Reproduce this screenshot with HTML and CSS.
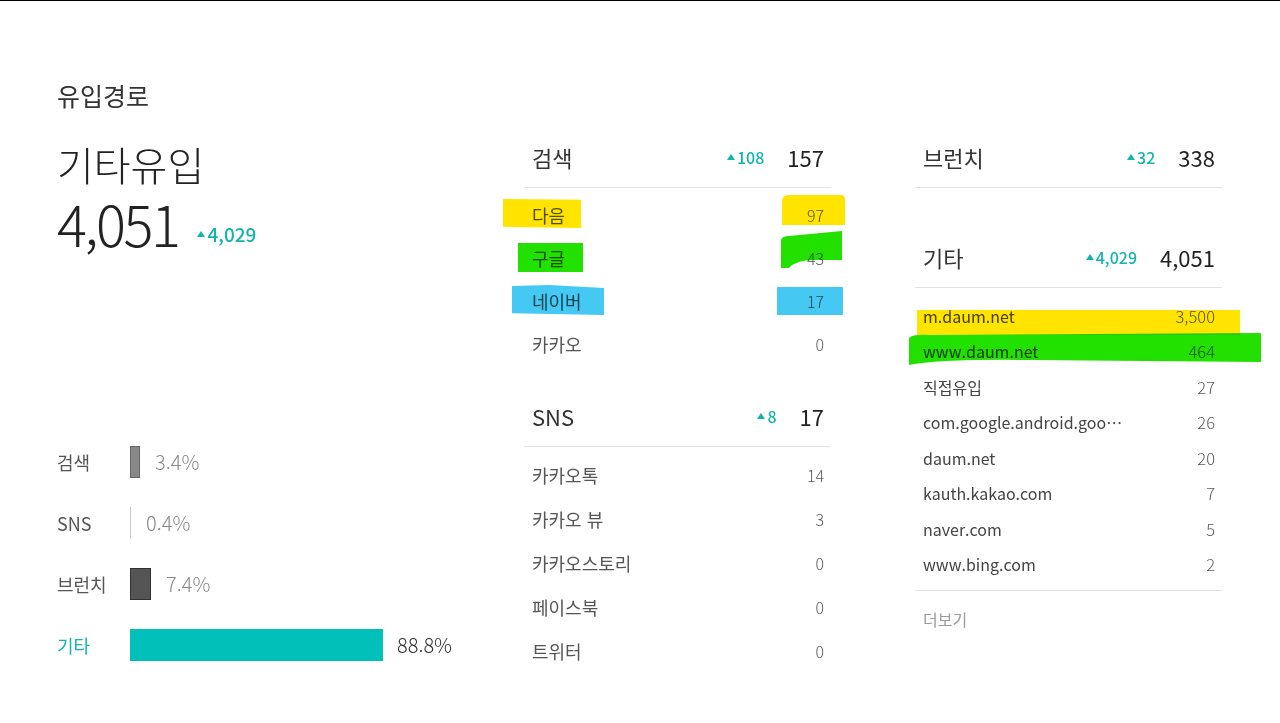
FILE: index.html
```html
<!DOCTYPE html>
<html lang="ko">
<head>
<meta charset="utf-8">
<title>유입경로</title>
<link rel="stylesheet" href="styles.css">
</head>
<body>
<div class="page">
  <h1 class="page-title">유입경로</h1>
  <div class="columns">
    <section class="summary">
      <h2 class="summary-title">기타유입</h2>
      <div class="summary-value"><span class="big-num">4,051</span><span class="delta delta-lg">4,029</span></div>
      <ul class="share-list">
        <li class="share-row"><span class="share-label">검색</span><span class="bar bar-search" style="width:10px"></span><span class="pct">3.4%</span></li>
        <li class="share-row"><span class="share-label">SNS</span><span class="bar bar-sns" style="width:1px"></span><span class="pct">0.4%</span></li>
        <li class="share-row"><span class="share-label">브런치</span><span class="bar bar-brunch" style="width:21px"></span><span class="pct">7.4%</span></li>
        <li class="share-row share-active"><span class="share-label">기타</span><span class="bar bar-etc" style="width:253px"></span><span class="pct">88.8%</span></li>
      </ul>
    </section>

    <section class="col">
      <div class="group">
        <div class="group-head"><span class="group-name">검색</span><span class="delta">108</span><span class="group-total">157</span></div>
        <ul class="rows rows-mid">
          <li class="row"><span class="row-name">다음</span><span class="row-num">97</span></li>
          <li class="row"><span class="row-name">구글</span><span class="row-num">43</span></li>
          <li class="row"><span class="row-name">네이버</span><span class="row-num">17</span></li>
          <li class="row"><span class="row-name">카카오</span><span class="row-num">0</span></li>
          <li class="hl hl-y1"></li>
          <li class="hl hl-y2"></li>
          <li class="hl hl-g1"></li>
          <li class="hl hl-g2"><svg viewBox="0 0 62 37" preserveAspectRatio="none"><path d="M1 9 Q2 5 9 5 L62 0 L62 29 L34 29 Q16 29 9 37 L1 37 Z" fill="#22e000"/></svg></li>
          <li class="hl hl-b1"></li>
          <li class="hl hl-b2"></li>
        </ul>
      </div>
      <div class="group group-sns">
        <div class="group-head"><span class="group-name">SNS</span><span class="delta">8</span><span class="group-total">17</span></div>
        <ul class="rows rows-sns">
          <li class="row"><span class="row-name">카카오톡</span><span class="row-num">14</span></li>
          <li class="row"><span class="row-name">카카오 뷰</span><span class="row-num">3</span></li>
          <li class="row"><span class="row-name">카카오스토리</span><span class="row-num">0</span></li>
          <li class="row"><span class="row-name">페이스북</span><span class="row-num">0</span></li>
          <li class="row"><span class="row-name">트위터</span><span class="row-num">0</span></li>
        </ul>
      </div>
    </section>

    <section class="col">
      <div class="group">
        <div class="group-head"><span class="group-name">브런치</span><span class="delta">32</span><span class="group-total">338</span></div>
      </div>
      <div class="group group-etc">
        <div class="group-head"><span class="group-name">기타</span><span class="delta">4,029</span><span class="group-total">4,051</span></div>
        <ul class="rows rows-small">
          <li class="row"><span class="row-name">m.daum.net</span><span class="row-num">3,500</span></li>
          <li class="row"><span class="row-name">www.daum.net</span><span class="row-num">464</span></li>
          <li class="row"><span class="row-name">직접유입</span><span class="row-num">27</span></li>
          <li class="row"><span class="row-name">com.google.android.goo…</span><span class="row-num">26</span></li>
          <li class="row"><span class="row-name">daum.net</span><span class="row-num">20</span></li>
          <li class="row"><span class="row-name">kauth.kakao.com</span><span class="row-num">7</span></li>
          <li class="row"><span class="row-name">naver.com</span><span class="row-num">5</span></li>
          <li class="row"><span class="row-name">www.bing.com</span><span class="row-num">2</span></li>
          <li class="hl hl-y3"></li>
          <li class="hl hl-g3"><svg viewBox="0 0 352 32" preserveAspectRatio="none"><path d="M0 5 Q4 1 20 2 L352 0 L352 29 L120 27 Q30 26 0 32 Z" fill="#22e000"/></svg></li>
        </ul>
        <a class="more" href="#">더보기</a>
      </div>
    </section>
  </div>
</div>
</body>
</html>
```

FILE: styles.css
```css
* { box-sizing: border-box; }

body {
  margin: 0;
  border-top: 1px solid #000;
  background: #fff;
  color: #333;
  font-family: "Noto Sans CJK KR", "Noto Sans", sans-serif;
}

ul { list-style: none; margin: 0; padding: 0; }

.page { padding: 0 0 0 57px; }

.page-title {
  margin: 0;
  padding-top: 78px;
  font-size: 25px;
  line-height: 32px;
  font-weight: 400;
  color: #333;
}

.columns {
  display: grid;
  grid-template-columns: 383px 307px 307px;
  column-gap: 84px;
  margin-top: 17px;
}

/* summary */
.summary-title {
  margin: 16px 0 0;
  font-size: 40px;
  line-height: 40px;
  font-weight: 300;
  color: #222;
}

.summary-value {
  margin-top: 7px;
  line-height: 64px;
  height: 64px;
}

.big-num {
  font-size: 56px;
  line-height: 64px;
  font-weight: 300;
  letter-spacing: -2.5px;
  color: #222;
}

.delta {
  color: #12b5ae;
  font-size: 16px;
  font-weight: 500;
  display: inline-flex;
  align-items: center;
  gap: 2px;
}
.delta::before {
  content: "";
  width: 0;
  height: 0;
  border-left: 4px solid transparent;
  border-right: 4px solid transparent;
  border-bottom: 6px solid #12b5ae;
}
.delta-lg {
  font-size: 19px;
  line-height: 24px;
  margin-left: 19px;
  vertical-align: 10px;
}

.share-list { margin-top: 176px; }

.share-row {
  display: flex;
  align-items: center;
  height: 61px;
}
.share-label {
  flex: none;
  width: 73px;
  font-size: 18px;
  color: #555;
}
.bar {
  height: 32px;
  flex: none;
}
.bar-search { background: #888; border: 1px solid #666; }
.bar-sns { background: #c8c8c8; }
.bar-brunch { background: #555; border: 1px solid #333; }
.bar-etc { background: #00c0b9; }
.pct {
  flex: none;
  margin-left: 15px;
  font-size: 20px;
  font-weight: 300;
  color: #888;
}
.share-active .share-label { color: #12b5ae; }
.share-active .pct { color: #333; margin-left: 14px; }

/* right columns */
.group-head {
  display: flex;
  align-items: center;
  height: 60px;
  padding: 0 7px 2px 8px;
  border-bottom: 1px solid #e3e3e3;
}
.group-name {
  flex: 1;
  font-size: 22px;
  font-weight: 400;
  color: #333;
}
.group-total {
  margin-left: 23px;
  font-size: 22px;
  font-weight: 400;
  color: #222;
}

.rows { position: relative; }
.row {
  display: flex;
  justify-content: space-between;
  align-items: center;
  padding: 0 7px 0 8px;
}
.row-num { color: #5a5a5a; font-weight: 300; }

.rows-mid { padding-top: 5px; }
.rows-mid .row { height: 43px; font-size: 18px; color: #555; }
.rows-mid .row-num { font-size: 16px; }

.group-sns { margin-top: 22px; }
.rows-sns { padding-top: 6px; }
.rows-sns .row { height: 44px; font-size: 18px; color: #555; }
.rows-sns .row-num { font-size: 16px; }

.group-etc { margin-top: 40px; }
.rows-small {
  padding: 10px 0 8px;
  border-bottom: 1px solid #e3e3e3;
}
.rows-small .row { height: 35.5px; font-size: 16px; color: #444; }
.rows-small .row-num { font-size: 16.5px; }

.more {
  display: block;
  padding: 17px 0 0 8px;
  font-size: 16px;
  line-height: 22px;
  color: #999;
  text-decoration: none;
}

/* marker highlights drawn over the screenshot */
.hl {
  position: absolute;
  mix-blend-mode: multiply;
}
.hl svg { display: block; width: 100%; height: 100%; }
.hl-y1 { left: -21px; top: 11px; width: 78px; height: 29px; background: #ffe400; clip-path: polygon(0 0, 100% 3%, 100% 100%, 0 96%); }
.hl-y2 { left: 258px; top: 7px; width: 63px; height: 30px; background: #ffe400; border-radius: 6px 4px 0 0; }
.hl-g1 { left: -6px; top: 55px; width: 65px; height: 29px; background: #22e000; }
.hl-g2 { left: 256px; top: 43px; width: 62px; height: 37px; }
.hl-b1 { left: -12px; top: 97px; width: 92px; height: 30px; background: #45c8f2; clip-path: polygon(0 3%, 40% 0, 100% 10%, 100% 100%, 0 94%); }
.hl-b2 { left: 253px; top: 99px; width: 66px; height: 28px; background: #45c8f2; }
.hl-y3 { left: 2px; top: 22px; width: 323px; height: 25px; background: #ffe400; }
.hl-g3 { left: -6px; top: 45px; width: 352px; height: 32px; }
```
